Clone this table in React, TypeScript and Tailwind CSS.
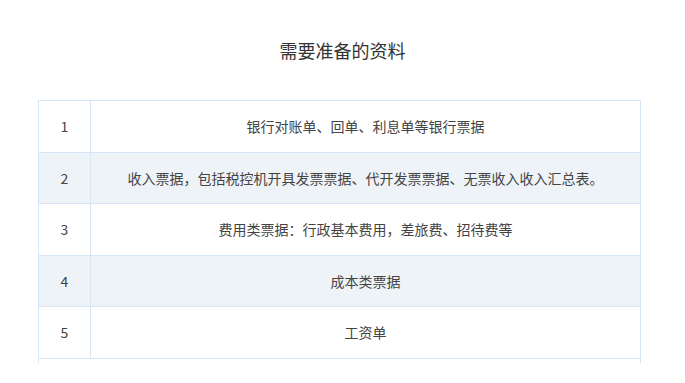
const rows = [
  { no: 1, text: "银行对账单、回单、利息单等银行票据", h: "h-[52px]", bg: "bg-white" },
  { no: 2, text: "收入票据，包括税控机开具发票票据、代开发票票据、无票收入收入汇总表。", h: "h-[51px]", bg: "bg-[#eef3f8]" },
  { no: 3, text: "费用类票据：行政基本费用，差旅费、招待费等", h: "h-[52px]", bg: "bg-white" },
  { no: 4, text: "成本类票据", h: "h-[51px]", bg: "bg-[#eef3f8]" },
  { no: 5, text: "工资单", h: "h-[52px]", bg: "bg-white" },
];

export default function App() {
  return (
    <div
      className="h-[383px] w-[685px] overflow-hidden bg-white"
      style={{ fontFamily: '"Noto Sans CJK SC", "Noto Sans", sans-serif' }}
    >
      <div className="flex h-[100px] items-center justify-center text-[18px] text-[#333]">
        需要准备的资料
      </div>
      <div className="ml-[38px] w-[603px] border-x border-t border-[#d6e6f7] pb-1">
        {rows.map((r) => (
          <div key={r.no} className={`flex border-b border-[#d6e6f7] ${r.h} ${r.bg}`}>
            <div className="flex w-[52px] items-center justify-center border-r border-[#d6e6f7] text-[14px] text-[#444]">
              {r.no}
            </div>
            <div className="flex flex-1 items-center justify-center text-[14px] text-[#444]">
              {r.text}
            </div>
          </div>
        ))}
      </div>
    </div>
  );
}
